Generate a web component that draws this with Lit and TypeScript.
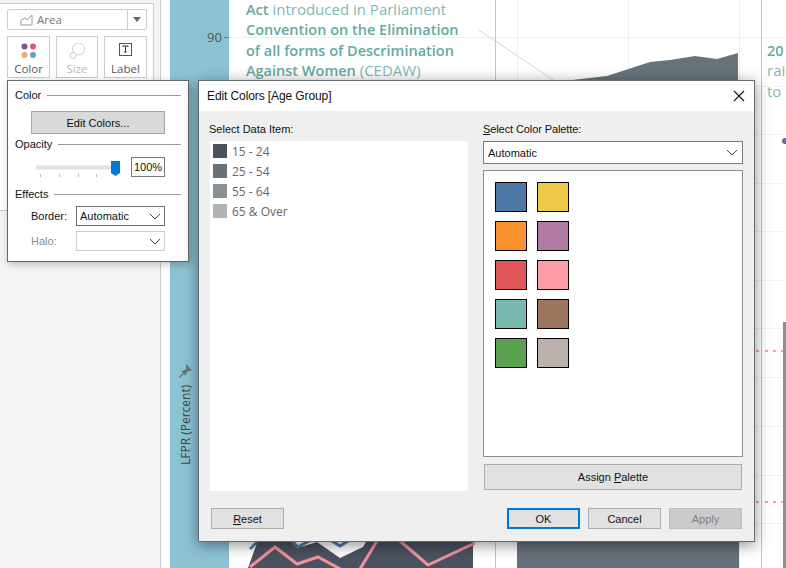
import { LitElement, html, css, svg } from 'lit';
import { customElement } from 'lit/decorators.js';

const DATA_ITEMS = [
  { label: '15 - 24', color: '#4a525f' },
  { label: '25 - 54', color: '#66717a' },
  { label: '55 - 64', color: '#8a9194' },
  { label: '65 & Over', color: '#b0b3b4' },
];

const PALETTE = [
  '#4e79a7', '#edc948',
  '#f89330', '#b07aa1',
  '#e15759', '#ff9da7',
  '#7ab8b2', '#9c755f',
  '#59a14f', '#bab0ac',
];

const GRID_YS = [37, 86, 134, 183, 231, 280, 328, 377, 426, 475, 523];

const chevron = html`<svg class="chev" width="12" height="7" viewBox="0 0 12 7">
  <path d="M1 1l5 5 5-5" fill="none" stroke="currentColor" stroke-width="1" />
</svg>`;

@customElement('app-root')
export class AppRoot extends LitElement {
  static styles = css`
    :host {
      display: block;
      position: relative;
      width: 786px;
      height: 568px;
      overflow: hidden;
      background: #fff;
      font-family: 'Liberation Sans', sans-serif;
      font-size: 11px;
      color: #111;
    }
    button {
      font: inherit;
      color: inherit;
      padding: 0;
      background: #e1e1e1;
      border: 1px solid #adadad;
    }
    u {
      text-underline-offset: 1px;
    }

    /* left pane */
    .pane {
      box-sizing: border-box;
      width: 161px;
      height: 568px;
      padding-top: 3px;
      background: #f4f4f4;
      border-right: 1px solid #ccc;
    }
    .card {
      box-sizing: border-box;
      width: 154px;
      height: 208px;
      padding: 5px 6px 0 7px;
      background: #fff;
      border-top: 1px solid #ccc;
      border-right: 1px solid #ccc;
      border-bottom: 1px solid #ccc;
    }
    .mark-type {
      display: flex;
      box-sizing: border-box;
      height: 21px;
      border: 1px solid #ccc;
      border-radius: 2px;
      color: #777;
      font-family: 'Open Sans', sans-serif;
      font-size: 11.5px;
      line-height: 19px;
    }
    .mark-name {
      display: flex;
      flex: 1;
      align-items: center;
      gap: 3px;
      padding-left: 12px;
      border-right: 1px solid #ccc;
    }
    .mark-arrow {
      display: flex;
      align-items: center;
      justify-content: center;
      width: 18px;
    }
    .shelf {
      display: grid;
      grid-template-columns: 43px 42px 43px;
      gap: 6px;
      margin-top: 6px;
    }
    .shelf-item {
      display: flex;
      flex-direction: column;
      align-items: center;
      box-sizing: border-box;
      height: 42px;
      padding-top: 6px;
      border: 1px solid #ccc;
      font-family: 'Open Sans', sans-serif;
      font-size: 11.5px;
      color: #555;
    }
    .shelf-item svg {
      height: 17px;
      margin-bottom: 1px;
    }
    .shelf-item.off {
      color: #bbb;
    }

    /* chart behind the windows */
    .note {
      position: absolute;
      left: 246px;
      top: -1px;
      width: 240px;
      font-family: 'Open Sans', sans-serif;
      font-size: 15px;
      line-height: 20.4px;
      color: #7dbab3;
      white-space: nowrap;
    }
    .note b,
    .note-side b {
      font-size: 14.5px;
      font-weight: 600;
      line-height: 1;
      color: #63aaa2;
    }
    .note-side {
      position: absolute;
      left: 767px;
      top: 40px;
      font-family: 'Open Sans', sans-serif;
      font-size: 15px;
      line-height: 20.4px;
      color: #7dbab3;
    }
    .tick {
      position: absolute;
      left: 207px;
      top: 29px;
      font-family: 'Open Sans', sans-serif;
      font-size: 13px;
      line-height: 16px;
      color: #555;
    }
    .axis-title {
      position: absolute;
      left: 178px;
      top: 383px;
      height: 82px;
      writing-mode: vertical-rl;
      transform: rotate(180deg);
      font-family: 'Open Sans', sans-serif;
      font-size: 12px;
      line-height: 16px;
      color: #444;
      white-space: nowrap;
    }
    .pin {
      position: absolute;
      left: 178px;
      top: 364px;
    }

    /* color popup */
    .popup {
      position: absolute;
      left: 7px;
      top: 80px;
      box-sizing: border-box;
      width: 182px;
      height: 182px;
      padding: 6px 7px 0;
      background: #fff;
      border: 1px solid #666;
      box-shadow: 2px 2px 8px rgba(0, 0, 0, 0.25);
    }
    .section {
      display: flex;
      align-items: center;
      gap: 6px;
      height: 16px;
      line-height: 16px;
    }
    .section::after {
      content: '';
      flex: 1;
      height: 1px;
      background: #999;
    }
    .edit {
      display: block;
      box-sizing: border-box;
      width: 134px;
      height: 23px;
      margin: 8px 0 2px 16px;
      background: #d9d9d9;
      border-color: #a5a5a5;
    }
    .opacity {
      display: flex;
      align-items: center;
      height: 20px;
      margin-top: 5px;
      padding-left: 21px;
    }
    .percent {
      box-sizing: border-box;
      width: 34px;
      height: 20px;
      margin-left: 11px;
      border: 1px solid #777;
      line-height: 18px;
      text-align: center;
    }
    .effects {
      margin-top: 9px;
    }
    .field {
      display: grid;
      grid-template-columns: 45px 89px;
      align-items: center;
      height: 20px;
      margin-top: 5px;
      padding-left: 16px;
    }
    .field.first {
      margin-top: 4px;
    }
    .field.off {
      color: #8a8a8a;
    }
    .combo {
      display: flex;
      align-items: center;
      justify-content: space-between;
      box-sizing: border-box;
      padding: 0 3px 0 3px;
      border: 1px solid #707070;
      background: #fff;
    }
    .field .combo {
      height: 20px;
    }
    .field.off .combo {
      border-color: #ccc;
      color: #aaa;
    }
    .chev {
      color: #444;
    }

    /* edit colors dialog */
    .dialog {
      position: absolute;
      left: 198px;
      top: 80px;
      box-sizing: border-box;
      width: 557px;
      height: 462px;
      background: #efefef;
      border: 1px solid #5f6b70;
      box-shadow: 0 3px 14px rgba(0, 0, 0, 0.45);
    }
    .title {
      display: flex;
      align-items: center;
      justify-content: space-between;
      box-sizing: border-box;
      height: 30px;
      padding: 0 9px 0 8px;
      background: #fff;
      font-size: 12px;
      letter-spacing: -0.1px;
    }
    .title svg {
      display: block;
    }
    .columns {
      display: grid;
      grid-template-columns: 258px 260px;
      gap: 15px;
      padding: 10px 0 0 11px;
    }
    .caption {
      height: 20px;
      margin-left: -1px;
      line-height: 16px;
    }
    .list {
      box-sizing: border-box;
      height: 350px;
      background: #fff;
    }
    .item {
      display: flex;
      align-items: center;
      gap: 5px;
      height: 20px;
      padding-left: 3px;
      font-family: 'Open Sans', sans-serif;
      font-size: 12px;
      color: #666;
    }
    .item i {
      width: 14px;
      height: 14px;
    }
    .right .combo {
      height: 23px;
      padding: 0 4px 0 4px;
      border-color: #7a7a7a;
    }
    .right .caption {
      margin-left: 0;
      letter-spacing: -0.1px;
    }
    .palette {
      display: grid;
      grid-template-columns: 32px 32px;
      grid-auto-rows: 30px;
      gap: 9px 10px;
      box-sizing: border-box;
      height: 287px;
      margin-top: 6px;
      padding: 11px 0 0 11px;
      background: #fff;
      border: 1px solid #8a8f94;
    }
    .palette i {
      box-sizing: border-box;
      border: 1px solid #000;
    }
    .assign {
      display: block;
      box-sizing: border-box;
      width: 258px;
      height: 26px;
      margin: 7px 0 0 1px;
    }
    .footer {
      display: flex;
      gap: 8px;
      margin-top: 17px;
      padding: 0 12px;
    }
    .footer button {
      box-sizing: border-box;
      width: 73px;
      height: 21px;
    }
    .footer .reset {
      margin-right: auto;
    }
    .footer .ok {
      border: 2px solid #0078d7;
    }
    .footer .apply {
      background: #cbcbcb;
      border-color: #bfbfbf;
      color: #808080;
    }
  `;

  _renderChart() {
    return html`<svg
      style="position:absolute;left:0;top:0"
      width="786"
      height="568"
      viewBox="0 0 786 568"
    >
      <rect x="170" y="0" width="59" height="568" fill="#8cc3d3" />
      ${GRID_YS.map(
        (y) => svg`<line x1="229" x2="786" y1=${y + 0.5} y2=${y + 0.5} stroke="#f0f0f0" />`,
      )}
      ${[517, 628, 739].map(
        (x) => svg`<line x1=${x + 0.5} x2=${x + 0.5} y1="0" y2="568" stroke="#eeeeee" />`,
      )}
      ${[495, 761].map(
        (x) => svg`<line x1=${x + 0.5} x2=${x + 0.5} y1="0" y2="568" stroke="#c4c4c4" />`,
      )}
      <line x1="224" x2="229" y1="37.5" y2="37.5" stroke="#777" />
      <line x1="479" y1="30" x2="556" y2="82" stroke="#d2d2d2" />
      <polygon
        points="555,82 607,76 650,62 670,60 695,56 717,59 738,53 738,82"
        fill="#68747c"
      />
      <rect x="517" y="540" width="222" height="28" fill="#66717a" />
      <polygon points="248,568 258,540 473,540 473,568" fill="#4a525f" />
      <polygon
        points="290,540 297,548 317,542 340,558 363,547 367,540"
        fill="#fff"
      />
      <g fill="none" stroke="#4e79a7" stroke-width="3">
        <path d="M250 549l9-9" />
        <path d="M292 541l6 6 11-6" />
        <path d="M332 541l8 5 8-5" />
      </g>
      <g fill="none" stroke="#f0929f" stroke-width="3">
        <path d="M250 567l25-20 22 17 21-7 24 13" />
        <path d="M377 541l-17 28" />
        <path d="M400 541l28 24 47-22" />
      </g>
      <g fill="#f6a0aa">
        ${[756, 765, 773, 781].map(
          (x) => svg`<rect x=${x} y="350" width="3" height="2" /><rect x=${x} y="501" width="3" height="2" />`,
        )}
      </g>
      <rect x="783" y="322" width="3" height="246" fill="#8a9194" />
      <circle cx="785" cy="141" r="3" fill="#4e79a7" />
    </svg>`;
  }

  _renderPane() {
    return html`<div class="pane">
      <div class="card">
        <div class="mark-type">
          <div class="mark-name">
            <svg width="14" height="14" viewBox="0 0 14 14">
              <path d="M1 12V7l4-2 2 2 5-5v10z" fill="none" stroke="#999" />
            </svg>
            Area
          </div>
          <div class="mark-arrow">
            <svg width="8" height="5" viewBox="0 0 8 5">
              <path d="M0 0h8L4 5z" fill="#666" />
            </svg>
          </div>
        </div>
        <div class="shelf">
          <div class="shelf-item">
            <svg width="16" height="17" viewBox="0 0 16 17">
              <circle cx="3.5" cy="3.5" r="3" fill="#75578c" />
              <circle cx="12" cy="3.5" r="3" fill="#e5566b" />
              <circle cx="3.5" cy="12" r="3" fill="#f3a672" />
              <circle cx="12" cy="12" r="3" fill="#6b9bcb" />
            </svg>
            Color
          </div>
          <div class="shelf-item off">
            <svg width="16" height="17" viewBox="0 0 16 17">
              <circle cx="9.5" cy="6" r="6" fill="none" stroke="#ccc" />
              <circle cx="4" cy="12.5" r="3" fill="#fff" stroke="#ccc" />
            </svg>
            Size
          </div>
          <div class="shelf-item">
            <svg width="14" height="17" viewBox="0 0 14 17">
              <rect x="0.5" y="0.5" width="12" height="12" fill="none" stroke="#555" />
              <path d="M4 4V3h5v1M6.5 3v6M5.2 9h2.6" fill="none" stroke="#333" />
            </svg>
            Label
          </div>
        </div>
      </div>
    </div>`;
  }

  _renderPopup() {
    return html`<div class="popup">
      <div class="section">Color</div>
      <button class="edit">Edit Colors...</button>
      <div class="section">Opacity</div>
      <div class="opacity">
        <svg width="84" height="20" viewBox="0 0 84 20">
          <rect x="0" y="9" width="78" height="3" fill="#e2e2e2" stroke="#e2e2e2" />
          ${[4, 23, 42, 60].map(
            (x) => svg`<line x1=${x + 0.5} x2=${x + 0.5} y1="17" y2="20" stroke="#bbb" />`,
          )}
          <polygon points="75,4 84,4 84,16 79.5,19 75,16" fill="#0078d7" />
        </svg>
        <div class="percent">100%</div>
      </div>
      <div class="section effects">Effects</div>
      <div class="field first">
        <span>Border:</span>
        <div class="combo">Automatic ${chevron}</div>
      </div>
      <div class="field off">
        <span>Halo:</span>
        <div class="combo"><span></span>${chevron}</div>
      </div>
    </div>`;
  }

  _renderDialog() {
    return html`<div class="dialog">
      <div class="title">
        <span>Edit Colors [Age Group]</span>
        <svg width="12" height="12" viewBox="0 0 12 12">
          <path d="M1 1l10 10M11 1L1 11" stroke="#111" stroke-width="1.1" />
        </svg>
      </div>
      <div class="columns">
        <div>
          <div class="caption">Select Data Item:</div>
          <div class="list">
            ${DATA_ITEMS.map(
              (item) => html`<div class="item">
                <i style="background:${item.color}"></i>${item.label}
              </div>`,
            )}
          </div>
        </div>
        <div class="right">
          <div class="caption"><u>S</u>elect Color Palette:</div>
          <div class="combo">Automatic ${chevron}</div>
          <div class="palette">
            ${PALETTE.map((color) => html`<i style="background:${color}"></i>`)}
          </div>
          <button class="assign">Assign <u>P</u>alette</button>
        </div>
      </div>
      <div class="footer">
        <button class="reset"><u>R</u>eset</button>
        <button class="ok">OK</button>
        <button>Cancel</button>
        <button class="apply">Apply</button>
      </div>
    </div>`;
  }

  render() {
    return html`
      ${this._renderPane()}
      ${this._renderChart()}
      <div class="note">
        <b>Act</b> introduced in Parliament<br />
        <b>Convention on the Elimination</b><br />
        <b>of all forms of Descrimination</b><br />
        <b>Against Women</b> (CEDAW)
      </div>
      <div class="note-side"><b>20</b><br />rai<br />to</div>
      <div class="tick">90</div>
      <div class="axis-title">LFPR (Percent)</div>
      <svg class="pin" width="14" height="14" viewBox="0 0 14 14">
        <path d="M8 0l6 6-2 1-2 0-2 3 0 2-2-2-4 4-1-1 4-4-2-2 2 0 3-2 0-2z" fill="#68747c" />
      </svg>
      ${this._renderPopup()}
      ${this._renderDialog()}
    `;
  }
}
